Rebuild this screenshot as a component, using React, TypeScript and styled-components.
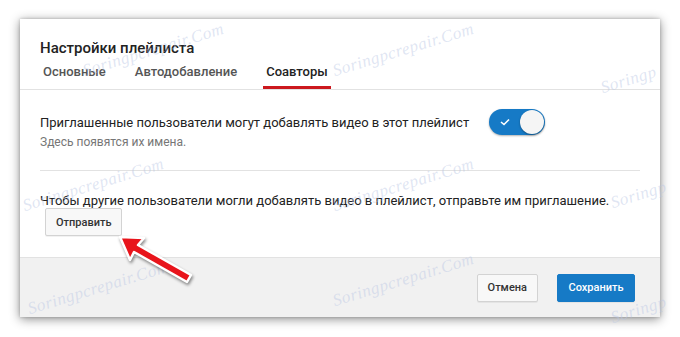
import styled, { createGlobalStyle } from "styled-components";

const GlobalStyle = createGlobalStyle`
  html, body {
    margin: 0;
    padding: 0;
    background: #ffffff;
    font-family: Roboto, "Noto Sans", Arial, sans-serif;
  }
`;

const Page = styled.div`
  width: 680px;
  height: 337px;
  position: relative;
  overflow: hidden;
  padding: 19px 20px 20px 20px;
  box-sizing: border-box;
  background: #ffffff;
`;

const Dialog = styled.div`
  width: 640px;
  height: 298px;
  background: #fff;
  box-shadow: 0 2px 10px rgba(0, 0, 0, 0.45), 0 0 3px rgba(0, 0, 0, 0.2);
  display: flex;
  flex-direction: column;
`;

const Header = styled.div`
  padding: 19px 20px 0 20px;
  border-bottom: 1px solid #e2e2e2;
`;

const Title = styled.div`
  font-size: 15px;
  font-weight: 500;
  color: #222;
  line-height: 20px;
`;

const Tabs = styled.div`
  display: flex;
  margin-top: 2px;
`;

const Tab = styled.div<{ $active?: boolean }>`
  font-size: 13px;
  font-weight: 500;
  color: ${(p) => (p.$active ? "#222" : "#555")};
  padding: 4px 3px 6px 3px;
  margin-right: 23px;
  border-bottom: 3px solid ${(p) => (p.$active ? "#cc181e" : "transparent")};
  line-height: 16px;
`;

const Body = styled.div`
  flex: 1;
  padding: 0 20px;
  display: flex;
  flex-direction: column;
`;

const SettingRow = styled.div`
  display: flex;
  align-items: flex-start;
  padding: 25px 0 21px 0;
  border-bottom: 1px solid #e2e2e2;
`;

const SettingText = styled.div`
  width: 449px;
`;

const Label = styled.div`
  font-size: 13px;
  color: #222;
  line-height: 16px;
`;

const Hint = styled.div`
  font-size: 12px;
  color: #767676;
  margin-top: 4px;
  line-height: 14px;
`;

const Switch = styled.div`
  width: 56px;
  height: 26px;
  margin-top: -6px;
  border-radius: 13px;
  background: #167ac6;
  position: relative;
  display: flex;
  align-items: center;
  padding-left: 10px;
  box-sizing: border-box;
  box-shadow: 0 1px 2px rgba(0, 0, 0, 0.3);
`;

const Knob = styled.div`
  position: absolute;
  right: 1px;
  top: 1px;
  width: 24px;
  height: 24px;
  border-radius: 50%;
  background: #f5f5f5;
  box-shadow: 0 1px 2px rgba(0, 0, 0, 0.35);
`;

const InviteBlock = styled.div`
  padding-top: 22px;
`;

const PlainButton = styled.button`
  font-family: Roboto, "Noto Sans", Arial, sans-serif;
  font-size: 11px;
  font-weight: 500;
  color: #333;
  background: #f8f8f8;
  border: 1px solid #d3d3d3;
  border-radius: 2px;
  height: 28px;
  padding: 0 10px;
  box-shadow: 0 1px 0 rgba(0, 0, 0, 0.05);
`;

const SendButton = styled(PlainButton)`
  margin: -1px 0 0 5px;
  width: 77px;
`;

const Footer = styled.div`
  height: 59px;
  background: #f1f1f1;
  border-top: 1px solid #e2e2e2;
  display: flex;
  justify-content: flex-end;
  align-items: center;
  padding: 0 25px 0 0;
  gap: 19px;
`;

const SaveButton = styled(PlainButton)`
  background: #167ac6;
  border-color: #167ac6;
  color: #fff;
  width: 78px;
`;

const Watermark = styled.div<{ $x: number; $y: number }>`
  position: absolute;
  left: ${(p) => p.$x}px;
  top: ${(p) => p.$y}px;
  font-family: "Liberation Serif", serif;
  font-style: italic;
  font-size: 17px;
  letter-spacing: 0.5px;
  color: rgba(185, 198, 228, 0.45);
  transform: rotate(-17deg);
  white-space: nowrap;
  pointer-events: none;
`;

const Arrow = styled.svg`
  position: absolute;
  left: 112px;
  top: 230px;
  filter: drop-shadow(1px 2px 1.5px rgba(0, 0, 0, 0.45));
`;

export default function App() {
  return (
    <>
      <GlobalStyle />
      <Page>
        <Dialog>
          <Header>
            <Title>Настройки плейлиста</Title>
            <Tabs>
              <Tab>Основные</Tab>
              <Tab>Автодобавление</Tab>
              <Tab $active>Соавторы</Tab>
            </Tabs>
          </Header>
          <Body>
            <SettingRow>
              <SettingText>
                <Label>Приглашенные пользователи могут добавлять видео в этот плейлист</Label>
                <Hint>Здесь появятся их имена.</Hint>
              </SettingText>
              <Switch>
                <svg width="12" height="10" viewBox="0 0 12 10">
                  <path d="M2 5 L5 7.5 L10 2.5" stroke="#fff" strokeWidth="1.6" fill="none" />
                </svg>
                <Knob />
              </Switch>
            </SettingRow>
            <InviteBlock>
              <Label>
                Чтобы другие пользователи могли добавлять видео в плейлист, отправьте им приглашение.
              </Label>
              <SendButton>Отправить</SendButton>
            </InviteBlock>
          </Body>
          <Footer>
            <PlainButton>Отмена</PlainButton>
            <SaveButton>Сохранить</SaveButton>
          </Footer>
        </Dialog>
        <Watermark $x={80} $y={40}>Soringpcrepair.Com</Watermark>
        <Watermark $x={330} $y={40}>Soringpcrepair.Com</Watermark>
        <Watermark $x={600} $y={70}>Soringp</Watermark>
        <Watermark $x={20} $y={175}>Soringpcrepair.Com</Watermark>
        <Watermark $x={330} $y={175}>Soringpcrepair.Com</Watermark>
        <Watermark $x={610} $y={185}>Soringp</Watermark>
        <Watermark $x={25} $y={278}>Soringpcrepair.Com</Watermark>
        <Watermark $x={330} $y={270}>Soringpcrepair.Com</Watermark>
        <Watermark $x={610} $y={300}>Soringp</Watermark>
        <Arrow width="90" height="60" viewBox="0 0 90 60">
          <path
            d="M8 7 L32 8 L26 15 L79 45 L75 52 L22 22 L18 30 Z"
            fill="#e8141b"
            stroke="#ffffff"
            strokeWidth="2.5"
            strokeLinejoin="round"
          />
        </Arrow>
      </Page>
    </>
  );
}
